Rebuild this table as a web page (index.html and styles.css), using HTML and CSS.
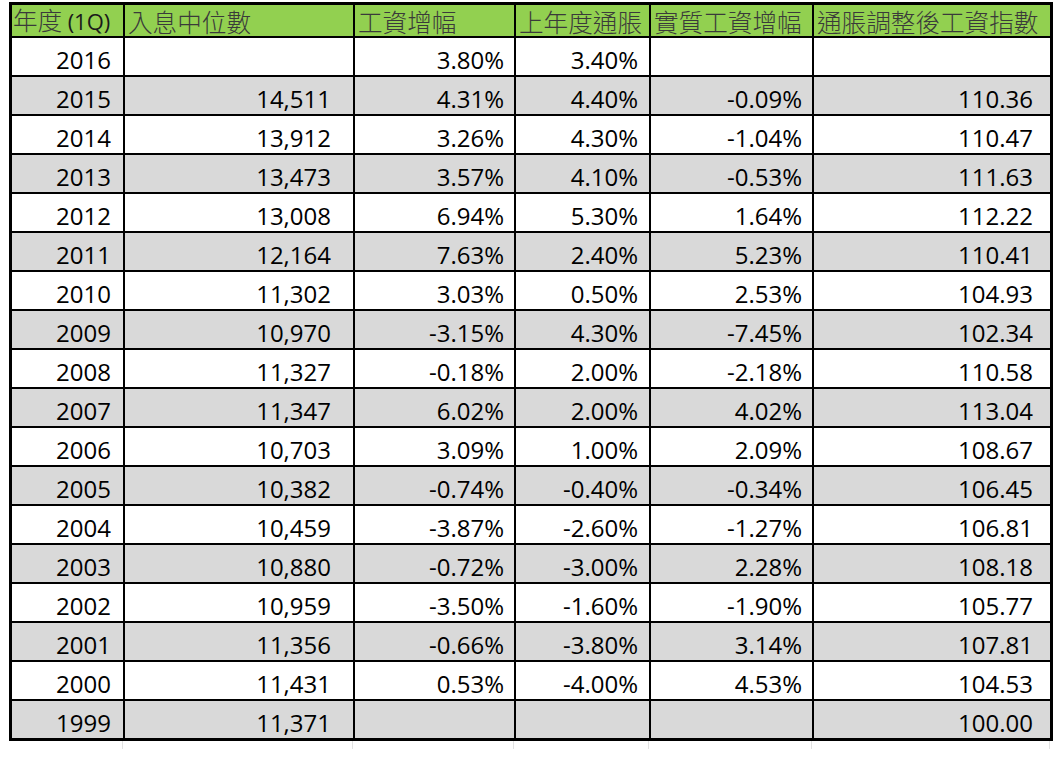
FILE: index.html
```html
<!DOCTYPE html>
<html lang="zh-Hant">
<head>
<meta charset="utf-8">
<title>入息中位數與工資指數</title>
<link rel="stylesheet" href="styles.css">
</head>
<body>
<div class="sheet">
  <div class="grid">
    <div class="row head">
      <div class="c h c1"><span>年度&nbsp;<span class="lat">(1Q)</span></span></div>
      <div class="c h c2">入息中位數</div>
      <div class="c h c3">工資增幅</div>
      <div class="c h c4">上年度通脹</div>
      <div class="c h c5">實質工資增幅</div>
      <div class="c h c6">通脹調整後工資指數</div>
    </div>
    <div class="row w"><div class="c c1">2016</div><div class="c c2"></div><div class="c c3">3.80%</div><div class="c c4">3.40%</div><div class="c c5"></div><div class="c c6"></div></div>
    <div class="row g"><div class="c c1">2015</div><div class="c c2">14,511</div><div class="c c3">4.31%</div><div class="c c4">4.40%</div><div class="c c5">-0.09%</div><div class="c c6">110.36</div></div>
    <div class="row w"><div class="c c1">2014</div><div class="c c2">13,912</div><div class="c c3">3.26%</div><div class="c c4">4.30%</div><div class="c c5">-1.04%</div><div class="c c6">110.47</div></div>
    <div class="row g"><div class="c c1">2013</div><div class="c c2">13,473</div><div class="c c3">3.57%</div><div class="c c4">4.10%</div><div class="c c5">-0.53%</div><div class="c c6">111.63</div></div>
    <div class="row w"><div class="c c1">2012</div><div class="c c2">13,008</div><div class="c c3">6.94%</div><div class="c c4">5.30%</div><div class="c c5">1.64%</div><div class="c c6">112.22</div></div>
    <div class="row g"><div class="c c1">2011</div><div class="c c2">12,164</div><div class="c c3">7.63%</div><div class="c c4">2.40%</div><div class="c c5">5.23%</div><div class="c c6">110.41</div></div>
    <div class="row w"><div class="c c1">2010</div><div class="c c2">11,302</div><div class="c c3">3.03%</div><div class="c c4">0.50%</div><div class="c c5">2.53%</div><div class="c c6">104.93</div></div>
    <div class="row g"><div class="c c1">2009</div><div class="c c2">10,970</div><div class="c c3">-3.15%</div><div class="c c4">4.30%</div><div class="c c5">-7.45%</div><div class="c c6">102.34</div></div>
    <div class="row w"><div class="c c1">2008</div><div class="c c2">11,327</div><div class="c c3">-0.18%</div><div class="c c4">2.00%</div><div class="c c5">-2.18%</div><div class="c c6">110.58</div></div>
    <div class="row g"><div class="c c1">2007</div><div class="c c2">11,347</div><div class="c c3">6.02%</div><div class="c c4">2.00%</div><div class="c c5">4.02%</div><div class="c c6">113.04</div></div>
    <div class="row w"><div class="c c1">2006</div><div class="c c2">10,703</div><div class="c c3">3.09%</div><div class="c c4">1.00%</div><div class="c c5">2.09%</div><div class="c c6">108.67</div></div>
    <div class="row g"><div class="c c1">2005</div><div class="c c2">10,382</div><div class="c c3">-0.74%</div><div class="c c4">-0.40%</div><div class="c c5">-0.34%</div><div class="c c6">106.45</div></div>
    <div class="row w"><div class="c c1">2004</div><div class="c c2">10,459</div><div class="c c3">-3.87%</div><div class="c c4">-2.60%</div><div class="c c5">-1.27%</div><div class="c c6">106.81</div></div>
    <div class="row g"><div class="c c1">2003</div><div class="c c2">10,880</div><div class="c c3">-0.72%</div><div class="c c4">-3.00%</div><div class="c c5">2.28%</div><div class="c c6">108.18</div></div>
    <div class="row w"><div class="c c1">2002</div><div class="c c2">10,959</div><div class="c c3">-3.50%</div><div class="c c4">-1.60%</div><div class="c c5">-1.90%</div><div class="c c6">105.77</div></div>
    <div class="row g"><div class="c c1">2001</div><div class="c c2">11,356</div><div class="c c3">-0.66%</div><div class="c c4">-3.80%</div><div class="c c5">3.14%</div><div class="c c6">107.81</div></div>
    <div class="row w"><div class="c c1">2000</div><div class="c c2">11,431</div><div class="c c3">0.53%</div><div class="c c4">-4.00%</div><div class="c c5">4.53%</div><div class="c c6">104.53</div></div>
    <div class="row g"><div class="c c1">1999</div><div class="c c2">11,371</div><div class="c c3"></div><div class="c c4"></div><div class="c c5"></div><div class="c c6">100.00</div></div>
  </div>
  <div class="stubs">
    <span class="s1"></span><span class="s2"></span><span class="s3"></span><span class="s4"></span><span class="s5"></span><span class="s6"></span>
  </div>
</div>
</body>
</html>
```

FILE: styles.css
```css
html, body {
  margin: 0;
  padding: 0;
  background: #ffffff;
}

.sheet {
  margin: 2px 0 0 9px;
  width: max-content;
}

.grid {
  display: grid;
  grid-template-columns: 111px 228px 159px 133px 161px 236px;
  grid-template-rows: 31px repeat(18, 37px);
  gap: 2px;
  padding: 3px;
  background: #000000;
}

.row {
  display: contents;
}

.c {
  display: flex;
  justify-content: flex-end;
  align-items: flex-end;
  overflow: hidden;
  white-space: nowrap;
  font-family: "Open Sans", "Noto Sans CJK TC", sans-serif;
  font-size: 24px;
  line-height: 31px;
  color: #000000;
}

.row.w .c { background: #ffffff; }
.row.g .c { background: #d9d9d9; }

.c1 { padding-right: 12px; }
.c2 { padding-right: 22px; }
.c3 { padding-right: 10px; }
.c4 { padding-right: 11px; }
.c5 { padding-right: 10px; }
.c6 { padding-right: 17px; }

.c.h {
  background: #92d050;
  justify-content: flex-start;
  overflow: visible;
  padding: 0 0 2px 3px;
  font-family: "Noto Sans CJK TC", "Open Sans", sans-serif;
  font-weight: 300;
  font-size: 24.6px;
  line-height: 26px;
  color: #3a3a3a;
}

.c.h.c1 {
  padding-left: 1px;
}

.lat {
  font-family: "Open Sans", sans-serif;
  font-weight: 400;
  font-size: 22px;
  color: #1a1a1a;
}

.stubs {
  display: grid;
  grid-template-columns: 114px 230px 161px 135px 163px 238px 3px;
  height: 8px;
}

.stubs span {
  border-right: 1px solid #e2e2e2;
}
```
